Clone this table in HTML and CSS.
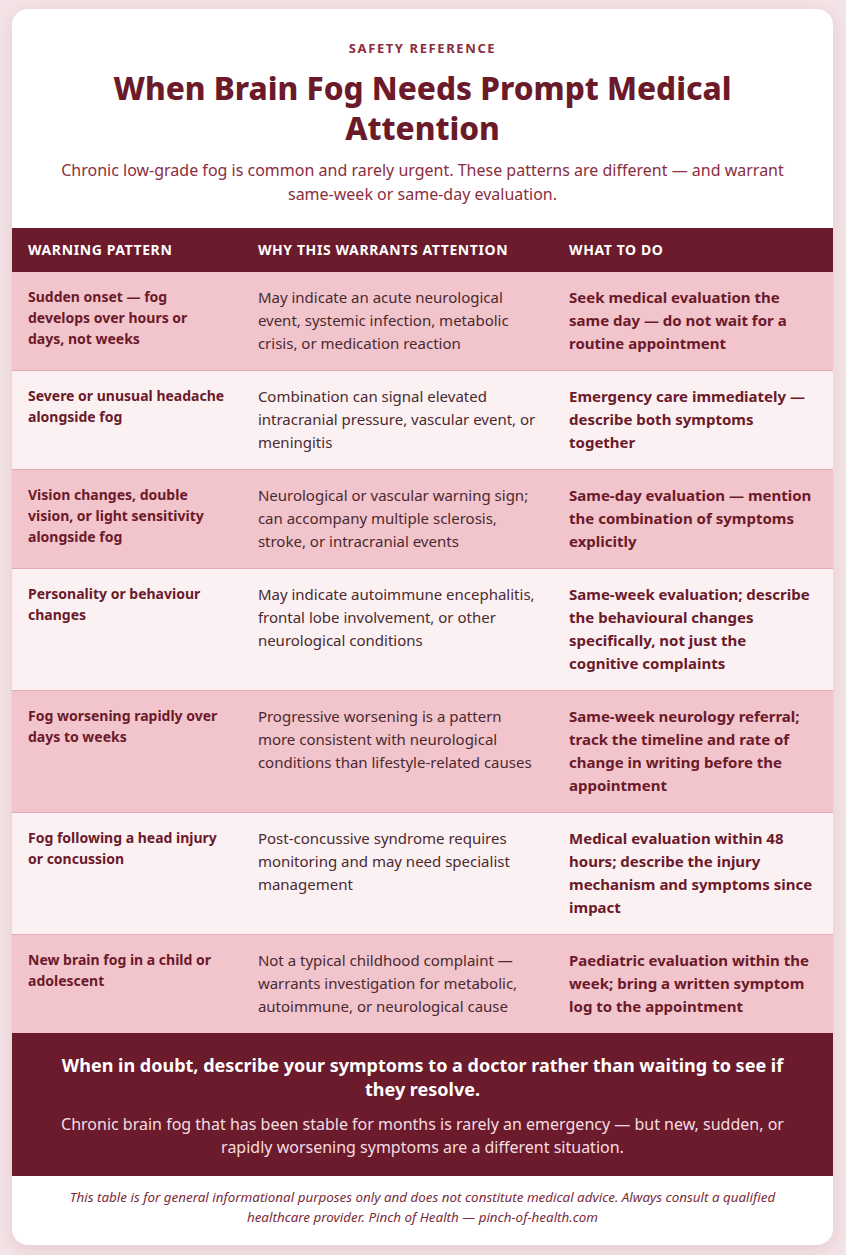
FILE: index.html
```html
<!DOCTYPE html>
<html lang="en">
<head>
<meta charset="utf-8">
<title>When Brain Fog Needs Prompt Medical Attention</title>
<link rel="stylesheet" href="styles.css">
</head>
<body>
<main class="card">
  <header class="hero">
    <p class="eyebrow">Safety Reference</p>
    <h1 class="title">When Brain Fog Needs Prompt Medical Attention</h1>
    <p class="lede">Chronic low-grade fog is common and rarely urgent. These patterns are different — and warrant same-week or same-day evaluation.</p>
  </header>
  <table class="warn-table">
    <colgroup>
      <col class="c1"><col class="c2"><col class="c3">
    </colgroup>
    <thead>
      <tr><th>Warning Pattern</th><th>Why This Warrants Attention</th><th>What To Do</th></tr>
    </thead>
    <tbody>
      <tr>
        <td class="pattern">Sudden onset — fog develops over hours or days, not weeks</td>
        <td class="why">May indicate an acute neurological event, systemic infection, metabolic crisis, or medication reaction</td>
        <td class="todo">Seek medical evaluation the same day — do not wait for a routine appointment</td>
      </tr>
      <tr>
        <td class="pattern">Severe or unusual headache alongside fog</td>
        <td class="why">Combination can signal elevated intracranial pressure, vascular event, or meningitis</td>
        <td class="todo">Emergency care immediately — describe both symptoms together</td>
      </tr>
      <tr>
        <td class="pattern">Vision changes, double vision, or light sensitivity alongside fog</td>
        <td class="why">Neurological or vascular warning sign; can accompany multiple sclerosis, stroke, or intracranial events</td>
        <td class="todo">Same-day evaluation — mention the combination of symptoms explicitly</td>
      </tr>
      <tr>
        <td class="pattern">Personality or behaviour changes</td>
        <td class="why">May indicate autoimmune encephalitis, frontal lobe involvement, or other neurological conditions</td>
        <td class="todo">Same-week evaluation; describe the behavioural changes specifically, not just the cognitive complaints</td>
      </tr>
      <tr>
        <td class="pattern">Fog worsening rapidly over days to weeks</td>
        <td class="why">Progressive worsening is a pattern more consistent with neurological conditions than lifestyle-related causes</td>
        <td class="todo">Same-week neurology referral; track the timeline and rate of change in writing before the appointment</td>
      </tr>
      <tr>
        <td class="pattern">Fog following a head injury or concussion</td>
        <td class="why">Post-concussive syndrome requires monitoring and may need specialist management</td>
        <td class="todo">Medical evaluation within 48 hours; describe the injury mechanism and symptoms since impact</td>
      </tr>
      <tr>
        <td class="pattern">New brain fog in a child or adolescent</td>
        <td class="why">Not a typical childhood complaint — warrants investigation for metabolic, autoimmune, or neurological cause</td>
        <td class="todo">Paediatric evaluation within the week; bring a written symptom log to the appointment</td>
      </tr>
    </tbody>
  </table>
  <section class="callout">
    <p class="callout-head">When in doubt, describe your symptoms to a doctor rather than waiting to see if they resolve.</p>
    <p class="callout-text">Chronic brain fog that has been stable for months is rarely an emergency — but new, sudden, or rapidly worsening symptoms are a different situation.</p>
  </section>
  <footer class="disclaimer">
    <p>This table is for general informational purposes only and does not constitute medical advice. Always consult a qualified healthcare provider. Pinch of Health — pinch-of-health.com</p>
  </footer>
</main>
</body>
</html>
```
FILE: styles.css
```css
* { box-sizing: border-box; }

html, body { margin: 0; }

body {
  background: #f4e4e7;
  padding: 9px 13px 11px 12px;
  font-family: "Noto Sans", "Open Sans", sans-serif;
  color: #4a2a31;
}

.card {
  background: #ffffff;
  border-radius: 16px;
  overflow: hidden;
  box-shadow: 0 4px 18px rgba(107, 27, 43, 0.12);
}

.hero {
  padding: 30px 40px 22px;
  text-align: center;
}

.eyebrow {
  margin: 0;
  font-size: 13px;
  line-height: 18px;
  font-weight: 700;
  letter-spacing: 1.6px;
  text-transform: uppercase;
  color: #8b2d40;
}

.title {
  margin: 11px 0 10px;
  font-size: 31.5px;
  line-height: 40px;
  font-weight: 800;
  color: #6b1a2a;
}

.lede {
  margin: 0;
  font-size: 16px;
  line-height: 24px;
  color: #8b2d40;
}

.warn-table {
  width: 100%;
  border-collapse: collapse;
  table-layout: fixed;
}

.c1 { width: 28%; }
.c2 { width: 37.9%; }
.c3 { width: 34.1%; }

.warn-table th {
  background: #6b1b2b;
  color: #ffffff;
  text-align: left;
  font-size: 14px;
  line-height: 16px;
  font-weight: 700;
  letter-spacing: 0.6px;
  text-transform: uppercase;
  padding: 14px 16px;
}

.warn-table td {
  vertical-align: top;
  padding: 14px 16px 15px;
  border-bottom: 1px solid #e3abb4;
}

.warn-table tbody tr:nth-child(odd) td { background: #f2c4cb; }
.warn-table tbody tr:nth-child(even) td { background: #fbf0f2; }
.warn-table tbody tr:last-child td { border-bottom: none; }

.pattern {
  font-size: 14px;
  line-height: 21px;
  font-weight: 700;
  color: #6b1a2a;
}

.why {
  font-size: 15px;
  line-height: 23px;
  color: #4a2a31;
}

.todo {
  font-size: 15px;
  line-height: 23px;
  font-weight: 700;
  color: #6b1a2a;
}

.callout {
  background: #6b1b2b;
  color: #ffffff;
  text-align: center;
  padding: 20px 40px 17px;
}

.callout-head {
  margin: 0;
  font-size: 18px;
  line-height: 24px;
  font-weight: 700;
}

.callout-text {
  margin: 12px 0 0;
  font-size: 16px;
  line-height: 23px;
  color: #f6dde2;
}

.disclaimer {
  padding: 11px 40px 18px;
  text-align: center;
}

.disclaimer p {
  margin: 0;
  font-size: 13.4px;
  line-height: 20px;
  font-style: italic;
  color: #7a2b3c;
}
```
